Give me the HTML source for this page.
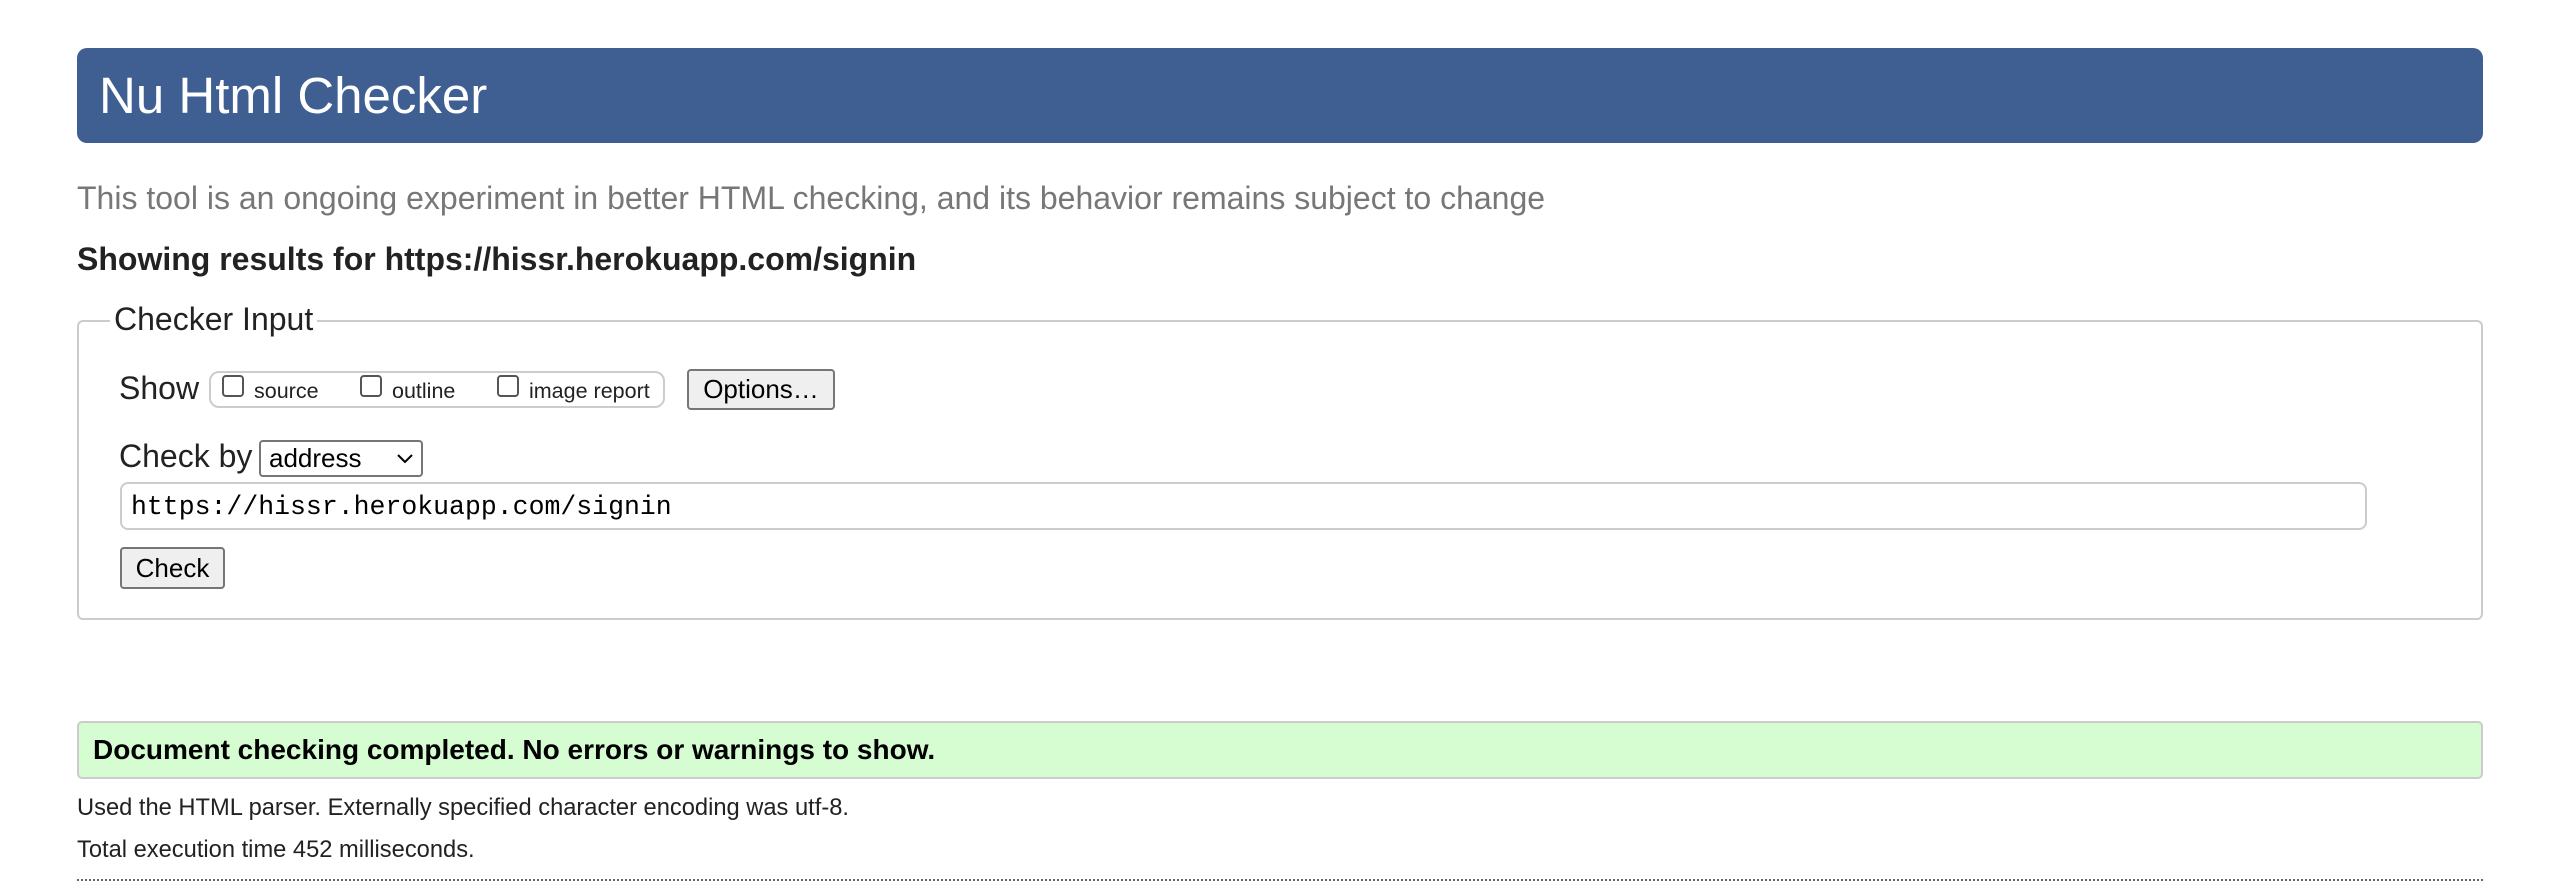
<!DOCTYPE html>
<html><head><meta charset="utf-8"><style>
*{margin:0;padding:0;box-sizing:border-box}
body{width:2558px;height:882px;background:#fff;font-family:"Liberation Sans",Arial,sans-serif;position:relative;overflow:hidden;color:#222}
.a{position:absolute;white-space:nowrap}
.hdr{left:77px;top:48px;width:2406px;height:95px;background:#3f5e91;border-radius:10px}
.hdr span{position:absolute;left:22px;top:18px;color:#fff;font-size:51px;line-height:60px}
.fs{left:77px;top:320px;width:2406px;height:300px;border:2px solid #ccc;border-radius:6px}
.cb{display:inline-block;width:22px;height:22px;border:2px solid #555;border-radius:4px;background:#fff;position:absolute;top:4px}
.btn{background:#efefef;border:2px solid #767676;border-radius:4px;font-size:26px;color:#000;text-align:center}
</style></head><body>
<div class="a hdr"><span>Nu Html Checker</span></div>
<div class="a" style="left:77px;top:178px;font-size:32px;color:#777;line-height:40px">This tool is an ongoing experiment in better HTML checking, and its behavior remains subject to change</div>
<div class="a" style="left:77px;top:241px;font-size:32px;font-weight:bold;color:#222;line-height:36px">Showing results for https://hissr.herokuapp.com/signin</div>
<div class="a fs"></div>
<div class="a" style="left:110px;top:301px;background:#fff;padding:0 4px;font-size:32px;line-height:36px;color:#222">Checker Input</div>
<div class="a" style="left:119px;top:369px;font-size:32px;line-height:38px">Show</div>
<div class="a" style="left:209px;top:371px;width:456px;height:37px;border:2px solid #ccc;border-radius:10px"></div>
<div class="a" style="left:222px;top:371px;height:37px;width:440px;font-size:21.5px;line-height:40px">
<span class="cb" style="left:0"></span><span style="position:absolute;left:32px">source</span>
<span class="cb" style="left:138px"></span><span style="position:absolute;left:170px">outline</span>
<span class="cb" style="left:275px"></span><span style="position:absolute;left:307px">image report</span>
</div>
<div class="a btn" style="left:687px;top:369px;width:148px;height:41px;line-height:37px">Options…</div>
<div class="a" style="left:119px;top:437px;font-size:32px;line-height:38px">Check by</div>
<div class="a" style="left:259px;top:440px;width:164px;height:37px;border:2px solid #767676;border-radius:4px;font-size:26px;line-height:33px;padding-left:8px;color:#000">address<svg style="position:absolute;right:8px;top:12px" width="16" height="10" viewBox="0 0 16 10"><path d="M1 1 L8 8 L15 1" fill="none" stroke="#000" stroke-width="2"/></svg></div>
<div class="a" style="left:120px;top:482px;width:2247px;height:48px;border:2px solid #ccc;border-radius:8px;font-family:'Liberation Mono','DejaVu Sans Mono',monospace;font-size:26.5px;line-height:46px;padding-left:9px;color:#000">https://hissr.herokuapp.com/signin</div>
<div class="a btn" style="left:120px;top:547px;width:105px;height:42px;line-height:38px">Check</div>
<div class="a" style="left:77px;top:721px;width:2406px;height:58px;background:#d6fcd2;border:2px solid #ccc;border-radius:5px"></div>
<div class="a" style="left:93px;top:732px;font-size:28px;font-weight:bold;color:#000;line-height:36px">Document checking completed. No errors or warnings to show.</div>
<div class="a" style="left:77px;top:794px;font-size:23.7px;line-height:28px;color:#222">Used the HTML parser. Externally specified character encoding was utf-8.</div>
<div class="a" style="left:77px;top:836px;font-size:23.7px;line-height:28px;color:#222">Total execution time 452 milliseconds.</div>
<div class="a" style="left:77px;top:879px;width:2406px;border-top:2px dotted #666"></div>
</body></html>
